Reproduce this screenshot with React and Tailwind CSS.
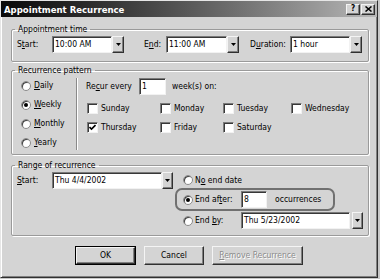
import React from 'react';

const U = ({ children }) => (
  <span className="underline underline-offset-[1px] decoration-[1px]">{children}</span>
);

const sunken =
  'bg-white border border-t-[#7a7a7a] border-l-[#7a7a7a] border-r-[#f2f2f2] border-b-[#f2f2f2] shadow-[inset_1px_1px_0_#383838]';

const raised =
  'bg-[#d4d4d4] border border-t-[#f4f4f4] border-l-[#f4f4f4] border-r-[#303030] border-b-[#303030] shadow-[inset_-1px_-1px_0_#808080]';

const TextBox = ({ value, className = '' }) => (
  <div className={`${sunken} h-[17px] flex items-center pl-[2px] ${className}`}>{value}</div>
);

const DropButton = ({ className = '' }) => (
  <div className={`${raised} h-[17px] flex items-center justify-center ${className}`}>
    <svg width="5" height="3" viewBox="0 0 5 3">
      <polygon points="0,0 5,0 2.5,3" fill="#000" />
    </svg>
  </div>
);

const Radio = ({ checked }) => (
  <div className="w-[10px] h-[10px] rounded-full bg-white border border-[#8a8a8a] shadow-[inset_1px_1px_0_#404040] flex items-center justify-center shrink-0">
    {checked && <div className="w-[4px] h-[4px] rounded-full bg-black" />}
  </div>
);

const Checkbox = ({ checked }) => (
  <div className={`${sunken} w-[11px] h-[11px] flex items-center justify-center shrink-0`}>
    {checked && (
      <svg width="7" height="7" viewBox="0 0 7 7">
        <path d="M0.5 3 L2.5 5 L6.5 1" stroke="#000" strokeWidth="1.6" fill="none" />
      </svg>
    )}
  </div>
);

const Group = ({ title, className = '', children }) => (
  <fieldset
    className={`border border-[#9a9a9a] rounded-[2px] shadow-[inset_1px_1px_0_#fff,1px_1px_0_#fff] px-[5px] ${className}`}
  >
    <legend className="px-[3px] -ml-[2px] leading-[12px]">{title}</legend>
    {children}
  </fieldset>
);

const Day = ({ label, checked, width }) => (
  <div className={`flex items-center ${width}`}>
    <Checkbox checked={checked} />
    <span className="ml-[3px]">{label}</span>
  </div>
);

export default function App() {
  return (
    <div className="w-[380px] h-[279px] bg-[#c8c8c8] overflow-hidden font-['DejaVu_Sans_Condensed','Liberation_Sans',sans-serif] text-[8.5px] text-black leading-[11px]">
      <div className="w-[378px] h-[278px] bg-[#d4d4d4] border border-t-[#e6e6e6] border-l-[#e6e6e6] border-r-[#303030] border-b-[#303030] shadow-[inset_1px_1px_0_#fff,inset_-1px_-1px_0_#808080]">
        {/* Title bar */}
        <div className="h-[16px] bg-linear-to-r from-[#0a0a0a] to-[#b8b8b8] flex items-center justify-between pl-[3px] pr-[2px]">
          <span className="text-white font-bold text-[9.5px]">Appointment Recurrence</span>
          <div className="flex items-center gap-[1px]">
            <div className={`${raised} w-[14px] h-[11px] flex items-center justify-center text-[8px] font-bold leading-none`}>?</div>
            <div className={`${raised} w-[14px] h-[11px] flex items-center justify-center`}>
              <svg width="7" height="6" viewBox="0 0 7 6">
                <path d="M0.5 0.5 L6.5 5.5 M6.5 0.5 L0.5 5.5" stroke="#000" strokeWidth="1.5" />
              </svg>
            </div>
          </div>
        </div>

        <div className="pl-[10px] mt-[6px]">
          {/* Appointment time */}
          <Group title="Appointment time" className="w-[358px] pb-[8px]">
            <div className="flex items-center mt-[1px]">
              <span className="w-[35px]">S<U>t</U>art:</span>
              <TextBox value="10:00 AM" className="w-[60px]" />
              <DropButton className="w-[12px]" />
              <span className="w-[22px] ml-[20px]">E<U>n</U>d:</span>
              <TextBox value="11:00 AM" className="w-[61px]" />
              <DropButton className="w-[12px]" />
              <span className="w-[40px] ml-[11px]">D<U>u</U>ration:</span>
              <TextBox value="1 hour" className="w-[60px]" />
              <DropButton className="w-[12px]" />
            </div>
          </Group>

          {/* Recurrence pattern */}
          <Group title="Recurrence pattern" className="w-[358px] mt-[2px] pb-[2px]">
            <div className="flex">
              <div className="w-[59px] flex flex-col">
                {[
                  ['D', 'aily', false],
                  ['W', 'eekly', true],
                  ['M', 'onthly', false],
                  ['Y', 'early', false],
                ].map(([k, rest, on]) => (
                  <div key={k} className="h-[19px] flex items-center pl-[4px]">
                    <Radio checked={on} />
                    <span className="ml-[3px]">
                      <U>{k}</U>
                      {rest}
                    </span>
                  </div>
                ))}
              </div>
              <div className="w-[2px] h-[72px] mt-[2px] border-l border-l-[#8a8a8a] border-r border-r-white" />
              <div className="ml-[8px] flex flex-col">
                <div className="flex items-center mt-[2px]">
                  <span className="w-[53px]">Re<U>c</U>ur every</span>
                  <TextBox value="1" className="w-[27px]" />
                  <span className="ml-[6px]">week(s) on:</span>
                </div>
                <div className="flex h-[19px] mt-[4px] ml-[1px]">
                  <Day label="Sunday" width="w-[73px]" />
                  <Day label="Monday" width="w-[63px]" />
                  <Day label="Tuesday" width="w-[68px]" />
                  <Day label="Wednesday" width="" />
                </div>
                <div className="flex h-[19px] ml-[1px]">
                  <Day label="Thursday" checked width="w-[73px]" />
                  <Day label="Friday" width="w-[63px]" />
                  <Day label="Saturday" width="w-[68px]" />
                </div>
              </div>
            </div>
          </Group>

          {/* Range of recurrence */}
          <Group title="Range of recurrence" className="w-[358px] mt-[4px] pb-[4px]">
            <div className="flex items-start">
              <div className="flex items-center mt-[1px]">
                <span className="w-[35px]">
                  <U>S</U>tart:
                </span>
                <TextBox value="Thu 4/4/2002" className="w-[110px]" />
                <DropButton className="w-[11px]" />
              </div>
              <div className="ml-[10px] flex flex-col">
                <div className="h-[18px] flex items-center">
                  <Radio />
                  <span className="ml-[2px]">
                    N<U>o</U> end date
                  </span>
                </div>
                <div className="relative h-[21px] flex items-center">
                  <div className="absolute left-[-8px] top-[-1px] w-[160px] h-[23px] border-2 border-[#707070] rounded-[7px] pointer-events-none" />
                  <Radio checked />
                  <span className="ml-[2px] w-[46px]">
                    End af<U>t</U>er:
                  </span>
                  <TextBox value="8" className="w-[26px]" />
                  <span className="ml-[8px]">occurrences</span>
                </div>
                <div className="h-[21px] flex items-center">
                  <Radio />
                  <span className="ml-[2px] w-[46px]">
                    End <U>b</U>y:
                  </span>
                  <TextBox value="Thu 5/23/2002" className="w-[109px]" />
                  <DropButton className="w-[11px] ml-[2px]" />
                </div>
              </div>
            </div>
          </Group>
        </div>

        {/* Buttons */}
        <div className="flex justify-center gap-[8px] mt-[10px]">
          <div className="w-[61px] h-[19px] border border-black">
            <div className={`${raised} w-full h-full flex items-center justify-center`}>OK</div>
          </div>
          <div className={`${raised} w-[60px] h-[19px] flex items-center justify-center`}>Cancel</div>
          <div
            className={`${raised} w-[91px] h-[19px] flex items-center justify-center text-[#8c8c8c] [text-shadow:1px_1px_0_#fff]`}
          >
            <span>
              <U>R</U>emove Recurrence
            </span>
          </div>
        </div>
      </div>
    </div>
  );
}
